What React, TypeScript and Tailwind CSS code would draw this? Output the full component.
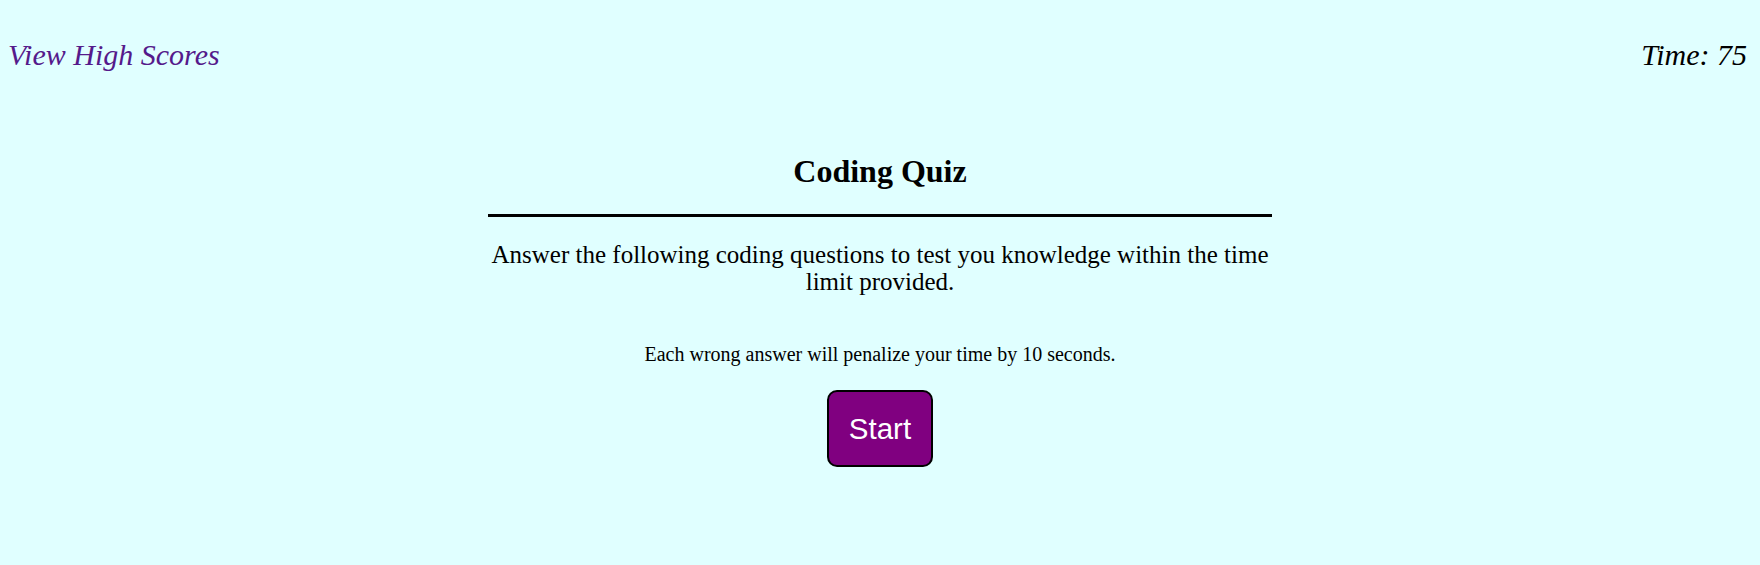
export default function App() {
  return (
    <div className="min-h-[565px] w-full bg-[#e0ffff] text-black font-['Liberation_Serif','Times_New_Roman',serif]">
      <header className="flex items-start justify-between pl-[8px] pr-[13px] pt-[38px]">
        <a href="#" className="text-[30px] italic leading-[1.107] text-[#551a8b] no-underline">
          View High Scores
        </a>
        <div className="text-[30px] italic leading-[1.107]">Time: 75</div>
      </header>
      <main className="mx-auto flex w-[784px] flex-col items-center pt-[83px]">
        <h1 className="text-[32px] font-bold leading-[1.107]">Coding Quiz</h1>
        <div className="mt-[24px] h-[3px] w-full bg-black" />
        <p className="mt-[24px] text-center text-[25px] leading-[1.107]">
          Answer the following coding questions to test you knowledge within the time limit provided.
        </p>
        <p className="mt-[47px] text-center text-[20px] leading-[1.107]">
          Each wrong answer will penalize your time by 10 seconds.
        </p>
        <button className="mt-[25px] rounded-[10px] border-2 border-black bg-[#800080] px-[20px] py-[20px] font-['Liberation_Sans',Arial,sans-serif] text-[29.5px] leading-[33px] text-white">
          Start
        </button>
      </main>
    </div>
  );
}
